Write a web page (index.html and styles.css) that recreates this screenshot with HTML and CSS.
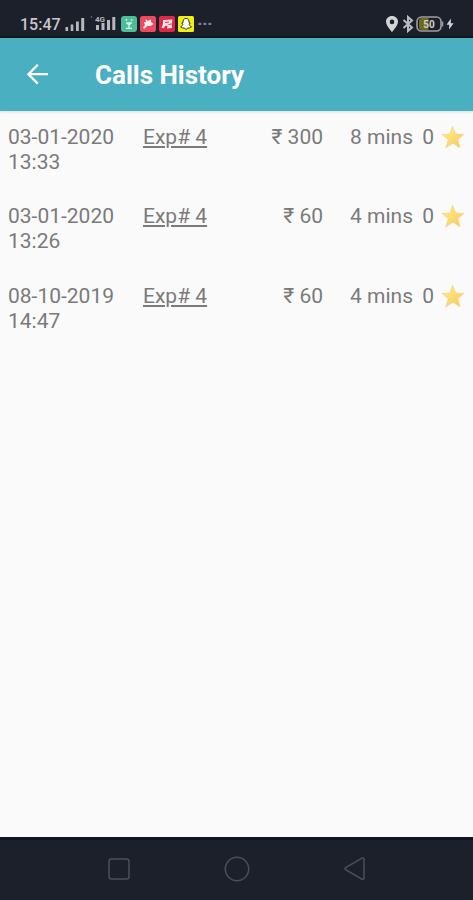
FILE: index.html
```html
<!DOCTYPE html>
<html lang="en">
  <head>
    <meta charset="utf-8">
    <title>Calls History</title>
    <meta name="viewport" content="width=device-width, initial-scale=1">
    <link rel="stylesheet" href="styles.css">
  </head>
  <body>
    <svg class="symbols" aria-hidden="true">
      <defs>
        <linearGradient id="star-fill" x1="0" y1="0" x2="1" y2="1">
          <stop offset="0.3" stop-color="#ffe57c" />
          <stop offset="1" stop-color="#f3c95c" />
        </linearGradient>
      </defs>
      <symbol id="star" viewBox="0 0 24 24">
        <path d="M11.5 1.3 L14.8 8.9 L23 9.4 L16.9 14.4 L18.8 22.8 L12 18.2 L4.8 22.8 L7.3 14.6 L1 9.6 L8.9 9.1 Z" fill="url(#star-fill)" stroke="#f0d080" stroke-width="0.6" stroke-linejoin="round" />
      </symbol>
    </svg>

    <div class="status-bar">
      <span class="clock">15:47</span>
      <svg class="signal" width="20" height="15" viewBox="0 0 20 15" fill="#b5b8bd">
        <rect x="0.5" y="10" width="2.6" height="4" />
        <rect x="5.7" y="7.5" width="2.6" height="6.5" />
        <rect x="11" y="4.5" width="2.8" height="9.5" />
        <rect x="16.2" y="1" width="3" height="13" />
      </svg>
      <svg class="signal-4g" width="26" height="17" viewBox="0 0 26 17" fill="#b5b8bd">
        <circle cx="1.5" cy="3" r="0.8" fill="#777b83" />
        <text x="5" y="8">4G</text>
        <rect x="6" y="11" width="3" height="5" />
        <rect x="11.5" y="9" width="3" height="7" />
        <rect x="17" y="6" width="3" height="10" />
        <rect x="22.3" y="3" width="3" height="13" />
      </svg>
      <div class="apps">
        <svg width="16" height="16" viewBox="0 0 16 16">
          <rect width="16" height="16" rx="3" fill="#4dbd98" />
          <path d="M4.5 4 H6.2 M9.8 4 H11.5 M5 7 H11 M6 7 L8 9 L10 7 M8 9 V12 M5 12.3 H11" fill="none" stroke="#d5f5e9" stroke-width="1.3" />
        </svg>
        <svg width="16" height="16" viewBox="0 0 16 16">
          <rect width="16" height="16" rx="2.5" fill="#ec4a61" />
          <path d="M5.5 3 L8 5 L11 3.5 L11 6 L13.5 8 L10.5 10 L7.5 9.8 L4 13 L3 11.5 L5 9 L4 6.5 L6 6 Z" fill="#fff1f2" />
        </svg>
        <svg width="16" height="16" viewBox="0 0 16 16">
          <rect width="16" height="16" rx="2" fill="#de2945" />
          <path d="M4 4 L13.5 3.5 L12.5 8 L13 12 L8 12.5 L8.5 9.5 L6 10 L5 12 L2.5 12 L4 8 Z" fill="#fbe3e7" />
          <path d="M6 6.5 L10 6 M9.5 8.5 L12 8" stroke="#de2945" stroke-width="1" />
        </svg>
        <svg width="16" height="16" viewBox="0 0 16 16">
          <rect width="16" height="16" rx="1.5" fill="#f1ee13" />
          <path d="M8 2.5 C10.4 2.5 11.1 4.2 11 6.7 L12.2 7 L11.2 8.3 C11.6 9.7 12.3 10.3 13.4 10.8 L11.4 12 L9.8 12 L8 13.4 L6.2 12 L4.6 12 L2.6 10.8 C3.7 10.3 4.4 9.7 4.8 8.3 L3.8 7 L5 6.7 C4.9 4.2 5.6 2.5 8 2.5 Z" fill="#fff" stroke="#34351c" stroke-width="1" />
        </svg>
      </div>
      <svg class="more" width="14" height="4" viewBox="0 0 14 4" fill="#7f838b">
        <rect x="0.5" y="0.8" width="2.8" height="2.2" />
        <rect x="5.5" y="0.8" width="2.8" height="2.2" />
        <rect x="10.5" y="0.8" width="2.8" height="2.2" />
      </svg>
      <div class="device">
        <svg width="14" height="18" viewBox="0 0 14 18">
          <path d="M7 1 C3.5 1 1 3.5 1 6.8 C1 10.8 7 17 7 17 C7 17 13 10.8 13 6.8 C13 3.5 10.5 1 7 1 Z M7 4.6 A2.3 2.3 0 1 1 7 9.2 A2.3 2.3 0 1 1 7 4.6 Z" fill="#d2d4d8" fill-rule="evenodd" />
        </svg>
        <svg width="12" height="18" viewBox="0 0 12 18">
          <path d="M1.5 5 L10 12.5 L6 16 V2 L10 5.5 L1.5 13" fill="none" stroke="#b9bcc2" stroke-width="2" />
        </svg>
        <svg class="battery" width="28" height="16" viewBox="0 0 28 16">
          <path d="M6 2 H12.5 V14 H6 Q3 14 3 11 V5 Q3 2 6 2 Z" fill="#6d6a1c" />
          <rect x="1" y="1" width="24" height="14" rx="4.5" fill="none" stroke="#9b9ea5" stroke-width="1.6" />
          <path d="M26.5 5.5 V10.5" stroke="#9b9ea5" stroke-width="1.5" />
          <text x="13" y="11.6" text-anchor="middle">50</text>
        </svg>
        <svg width="8" height="12" viewBox="0 0 8 12">
          <path d="M4.9 0.5 L0.5 6.8 H3.2 L3 11.5 L7.6 5.2 H4.8 Z" fill="#cfd1d5" />
        </svg>
      </div>
    </div>

    <header class="app-bar">
      <svg class="back" width="24" height="24" viewBox="0 0 24 24">
        <path d="M23 11.2 H3 M12.8 1.8 L3.4 11.2 L12.8 20.6" fill="none" stroke="#fff" stroke-width="2.3" />
      </svg>
      <h1>Calls History</h1>
    </header>

    <main class="calls">
      <div class="call">
        <div class="date">03-01-2020 13:33</div>
        <div class="expert"><a>Exp# 4</a></div>
        <div class="price">₹ 300</div>
        <div class="duration">8 mins</div>
        <div class="rating">0</div>
        <svg class="star"><use href="#star" /></svg>
      </div>
      <div class="call">
        <div class="date">03-01-2020 13:26</div>
        <div class="expert"><a>Exp# 4</a></div>
        <div class="price">₹ 60</div>
        <div class="duration">4 mins</div>
        <div class="rating">0</div>
        <svg class="star"><use href="#star" /></svg>
      </div>
      <div class="call">
        <div class="date">08-10-2019 14:47</div>
        <div class="expert"><a>Exp# 4</a></div>
        <div class="price">₹ 60</div>
        <div class="duration">4 mins</div>
        <div class="rating">0</div>
        <svg class="star"><use href="#star" /></svg>
      </div>
    </main>

    <nav class="nav-bar">
      <svg width="26" height="26" viewBox="0 0 26 26">
        <rect x="3" y="3" width="20" height="20" rx="2.5" />
      </svg>
      <svg width="26" height="26" viewBox="0 0 26 26">
        <circle cx="13" cy="13" r="11.7" />
      </svg>
      <svg width="26" height="26" viewBox="0 0 26 26">
        <path d="M20 2.2 L3.6 11.7 Q2.4 12.7 3.6 13.7 L20 23.2 Q22 23.8 22 22 V3.4 Q22 1.6 20 2.2 Z" />
      </svg>
    </nav>
  </body>
</html>
```
FILE: styles.css
```css
* {
  box-sizing: border-box;
}

body {
  margin: 0;
  height: 900px;
  display: flex;
  flex-direction: column;
  overflow: hidden;
  font-family: Roboto, sans-serif;
  background-color: #fafafa;
  color: #7a7a7a;
}

svg {
  display: block;
  flex: none;
}

.symbols {
  position: absolute;
  width: 0;
  height: 0;
}

/* status bar */
.status-bar {
  flex: none;
  display: flex;
  align-items: center;
  height: 38px;
  padding: 12px 19px 0 20px;
  background-color: #1c202b;
  border-bottom: 2px solid #14151f;
}

.clock {
  width: 45px;
  margin-top: 1px;
  font-size: 16px;
  line-height: 18px;
  font-weight: 500;
  color: #c6c8cc;
}

.signal-4g {
  margin-left: 5px;
  margin-top: -3px;
}

.signal-4g text {
  font-size: 8px;
  font-weight: bold;
}

.apps {
  display: flex;
  gap: 3px;
  margin-left: 5px;
}

.more {
  margin-left: 4px;
}

.device {
  display: flex;
  align-items: center;
  margin-left: auto;
}

.device svg {
  margin-left: 2px;
}

.device svg:first-child {
  margin-right: 1px;
}

.battery text {
  font-size: 10px;
  font-weight: bold;
  fill: #d0d1ca;
}

/* app bar */
.app-bar {
  flex: none;
  display: flex;
  align-items: center;
  height: 73px;
  padding-left: 25px;
  background-color: #4aafc0;
  box-shadow: 0 1px 3px rgba(0, 0, 0, 0.12);
}

.app-bar h1 {
  margin: 1px 0 0 46px;
  font-size: 26px;
  line-height: 30px;
  font-weight: bold;
  color: #fff;
}

/* calls list */
.calls {
  flex: 1;
  padding: 13.9px 8px 0;
  font-size: 21px;
  line-height: 25px;
}

.call {
  display: grid;
  grid-template-columns: 135px 90px 90px 90px 21px 31px;
  height: 79.5px;
}

/* date and time break onto two lines */
.date {
  padding-right: 25px;
}

.expert a {
  text-decoration: underline;
}

.price,
.duration,
.rating {
  text-align: right;
}

.star {
  justify-self: end;
  width: 24px;
  height: 24px;
}

/* navigation bar */
.nav-bar {
  flex: none;
  display: flex;
  align-items: center;
  justify-content: center;
  gap: 92px;
  height: 63px;
  padding-bottom: 2px;
  border-top: 3px solid #101520;
  background-color: #1c202b;
}

.nav-bar svg {
  fill: none;
  stroke: #4c4f58;
  stroke-width: 1.5;
}
```
